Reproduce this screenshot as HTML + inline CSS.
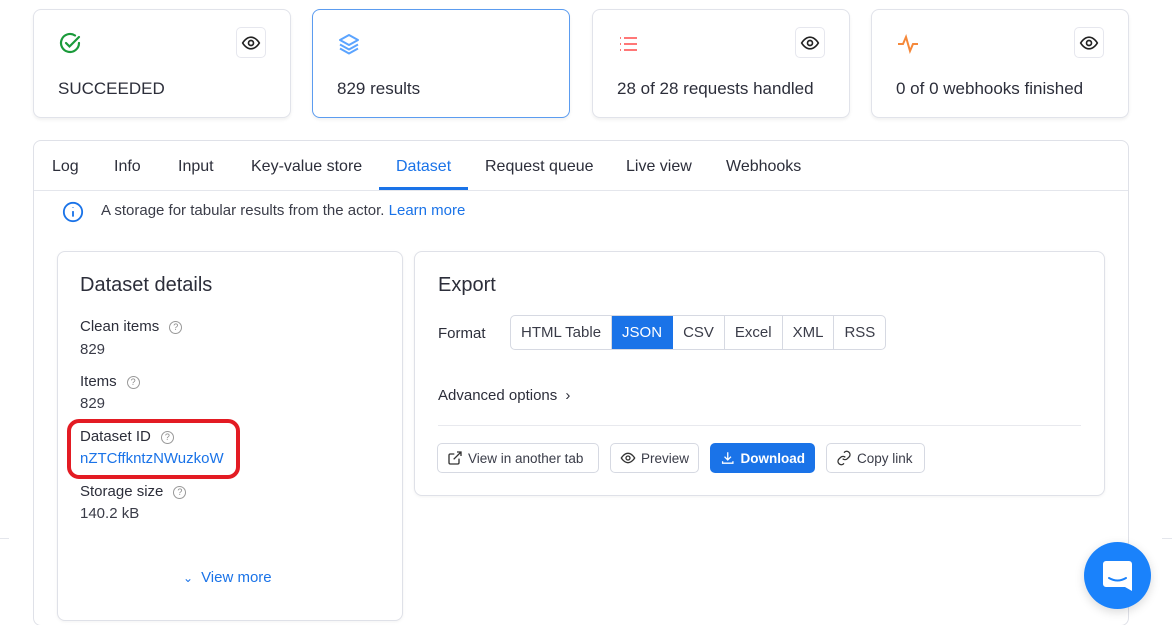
<!DOCTYPE html>
<html><head><meta charset="utf-8"><style>
*{box-sizing:border-box;margin:0;padding:0}
html,body{width:1172px;height:625px;overflow:hidden}
body{background:#fff;font-family:"Liberation Sans",sans-serif;color:#2c2e3a;position:relative}
.card{position:absolute;top:9px;width:258px;height:109px;border:1px solid #e1e3ea;border-radius:8px;box-shadow:0 2px 3px rgba(0,0,0,.06);background:#fff}
.card .ic{position:absolute;left:24px;top:22px}
.card .eye{position:absolute;right:24px;top:17px;width:30px;height:31px;border:1px solid #e6e7ee;border-radius:5px;display:flex;align-items:center;justify-content:center}
.card .t{position:absolute;left:24px;top:69px;font-size:17px}
.panel{position:absolute;left:33px;top:140px;width:1096px;height:486px;border:1px solid #dfe1e8;border-radius:8px}
.tabs{position:absolute;left:0;top:0;width:100%;height:50px;border-bottom:1px solid #e4e6ec}
.tab{position:absolute;top:17px;font-size:16px}
.box{position:absolute;border:1px solid #dfe1e8;border-radius:8px;background:#fff;box-shadow:0 1px 3px rgba(0,0,0,.05)}
.lbl{position:absolute;left:22px;font-size:15px}
.val{position:absolute;left:22px;font-size:15px;color:#3a3c48}
.q{display:inline-block;width:13px;height:13px;border:1px solid #999;border-radius:50%;font-size:9px;text-align:center;line-height:11px;color:#888;margin-left:10px;vertical-align:1px}
.seg{position:absolute;top:315px;height:35px;border:1px solid #d6d9e2;display:flex;border-radius:5px;overflow:hidden;left:510px}
.seg div{padding:0 10px;line-height:33px;font-size:15px;border-right:1px solid #d6d9e2;color:#3a3c48}
.seg div:last-child{border-right:none}
.btn{position:absolute;top:443px;height:30px;border:1px solid #d6d9e2;border-radius:5px;font-size:13.5px;display:flex;align-items:center;gap:5px;padding:0 9px;color:#3a3c48}
</style></head><body>
<div class="card" style="left:33px"><svg class="ic" width="24" height="24" viewBox="0 0 24 24" fill="none" stroke="#1a9a3a" stroke-width="2.2" stroke-linecap="round"><path d="M21 11a9 9 0 1 1-4-7.5"/><path d="M8 11l3.5 3.5L21 5"/></svg><div class="eye"><svg width="20" height="20" viewBox="0 0 24 24" fill="none" stroke="#222" stroke-width="2"><path d="M2 12s4-7 10-7 10 7 10 7-4 7-10 7S2 12 2 12z"/><circle cx="12" cy="12" r="3"/></svg></div><div class="t">SUCCEEDED</div></div>
<div class="card" style="left:312px;border-color:#5b9cf0"><svg class="ic" width="24" height="24" viewBox="0 0 24 24" fill="none" stroke="#5ba4ff" stroke-width="2" stroke-linejoin="round"><path d="M12 3l9 5-9 5-9-5z"/><path d="M3 12.5l9 5 9-5"/><path d="M3 16.5l9 5 9-5"/></svg><div class="t">829 results</div></div>
<div class="card" style="left:592px"><svg class="ic" width="24" height="24" viewBox="0 0 24 24" fill="none" stroke="#f77" stroke-width="2"><path d="M7 6h13M7 12h13M7 18h13M3 6h1M3 12h1M3 18h1"/></svg><div class="eye"><svg width="20" height="20" viewBox="0 0 24 24" fill="none" stroke="#222" stroke-width="2"><path d="M2 12s4-7 10-7 10 7 10 7-4 7-10 7S2 12 2 12z"/><circle cx="12" cy="12" r="3"/></svg></div><div class="t">28 of 28 requests handled</div></div>
<div class="card" style="left:871px"><svg class="ic" width="24" height="24" viewBox="0 0 24 24" fill="none" stroke="#f5883a" stroke-width="2"><path d="M2 12h5l3-7 4 14 3-7h5"/></svg><div class="eye"><svg width="20" height="20" viewBox="0 0 24 24" fill="none" stroke="#222" stroke-width="2"><path d="M2 12s4-7 10-7 10 7 10 7-4 7-10 7S2 12 2 12z"/><circle cx="12" cy="12" r="3"/></svg></div><div class="t">0 of 0 webhooks finished</div></div>

<div style="position:absolute;left:0;top:538px;width:9px;height:1px;background:#e4e6ec"></div>
<div style="position:absolute;left:1162px;top:538px;width:10px;height:1px;background:#e4e6ec"></div>

<div class="panel">
<div class="tabs">
<div class="tab" style="left:18px">Log</div>
<div class="tab" style="left:80px">Info</div>
<div class="tab" style="left:144px">Input</div>
<div class="tab" style="left:217px">Key-value store</div>
<div class="tab" style="left:362px;color:#1a73e8">Dataset</div>
<div style="position:absolute;left:345px;top:46px;width:89px;height:3px;background:#1a73e8"></div>
<div class="tab" style="left:451px">Request queue</div>
<div class="tab" style="left:592px">Live view</div>
<div class="tab" style="left:692px">Webhooks</div>
</div>
<svg style="position:absolute;left:28px;top:60px" width="22" height="22" viewBox="0 0 24 24" fill="none" stroke="#1a73e8" stroke-width="2"><circle cx="12" cy="12" r="10"/><path d="M12 11v6M12 7v.5"/></svg>
<div style="position:absolute;left:67px;top:61px;font-size:15px;color:#3a3c48">A storage for tabular results from the actor. <span style="color:#1a73e8">Learn more</span></div>
</div>

<div class="box" style="left:57px;top:251px;width:346px;height:370px">
<div style="position:absolute;left:22px;top:22px;font-size:20px">Dataset details</div>
<div class="lbl" style="top:66px">Clean items<span class="q">?</span></div><div class="val" style="top:89px">829</div>
<div class="lbl" style="top:121px">Items<span class="q">?</span></div><div class="val" style="top:143px">829</div>
<div class="lbl" style="top:176px">Dataset ID<span class="q">?</span></div><div class="val" style="top:198px;color:#1a73e8">nZTCffkntzNWuzkoW</div>
<div class="lbl" style="top:231px">Storage size<span class="q">?</span></div><div class="val" style="top:253px">140.2 kB</div>
<div style="position:absolute;left:125px;top:317px;font-size:15px;color:#1a73e8"><span style="font-size:12px;margin-right:8px">&#x2304;</span>View more</div>
</div>
<div style="position:absolute;left:67px;top:419px;width:173px;height:60px;border:4px solid #e31b23;border-radius:12px"></div>

<div class="box" style="left:414px;top:251px;width:691px;height:245px">
<div style="position:absolute;left:23px;top:22px;font-size:20px">Export</div>
<div style="position:absolute;left:23px;top:73px;font-size:15px">Format</div>
<div style="position:absolute;left:23px;top:135px;font-size:15px">Advanced options <span style="margin-left:4px">&#x203A;</span></div>
<div style="position:absolute;left:23px;top:173px;width:643px;height:1px;background:#e8e9ee"></div>
</div>
<div class="seg"><div>HTML Table</div><div style="background:#1a73e8;color:#fff;border-color:#1a73e8">JSON</div><div>CSV</div><div>Excel</div><div>XML</div><div>RSS</div></div>
<div class="btn" style="left:437px;width:162px"><svg width="16" height="16" viewBox="0 0 24 24" fill="none" stroke="#333" stroke-width="2"><path d="M18 13v6a2 2 0 0 1-2 2H5a2 2 0 0 1-2-2V8a2 2 0 0 1 2-2h6M15 3h6v6M10 14L21 3"/></svg>View in another tab</div>
<div class="btn" style="left:610px;width:89px"><svg width="16" height="16" viewBox="0 0 24 24" fill="none" stroke="#333" stroke-width="2"><path d="M2 12s4-7 10-7 10 7 10 7-4 7-10 7S2 12 2 12z"/><circle cx="12" cy="12" r="3"/></svg>Preview</div>
<div class="btn" style="left:710px;width:105px;background:#1a73e8;border-color:#1a73e8;color:#fff;font-weight:bold"><svg width="16" height="16" viewBox="0 0 24 24" fill="none" stroke="#fff" stroke-width="2"><path d="M12 3v12M7 10l5 5 5-5M4 17v3h16v-3"/></svg>Download</div>
<div class="btn" style="left:826px;width:99px"><svg width="16" height="16" viewBox="0 0 24 24" fill="none" stroke="#333" stroke-width="2"><path d="M10 13a5 5 0 0 0 7 0l3-3a5 5 0 0 0-7-7l-1 1M14 11a5 5 0 0 0-7 0l-3 3a5 5 0 0 0 7 7l1-1"/></svg>Copy link</div>

<div style="position:absolute;left:1084px;top:542px;width:67px;height:67px;border-radius:50%;background:#1a82fb;box-shadow:0 3px 10px rgba(0,0,0,.15)">
<svg style="position:absolute;left:17px;top:17px" width="33" height="34" viewBox="0 0 33 34"><path d="M5 2h23a3 3 0 0 1 3 3v27l-7-4H5a3 3 0 0 1-3-3V5a3 3 0 0 1 3-3z" fill="#fff"/><path d="M8 19q8.5 5 17 0" stroke="#1a82fb" stroke-width="2" fill="none" stroke-linecap="round"/></svg></div>
</body></html>
